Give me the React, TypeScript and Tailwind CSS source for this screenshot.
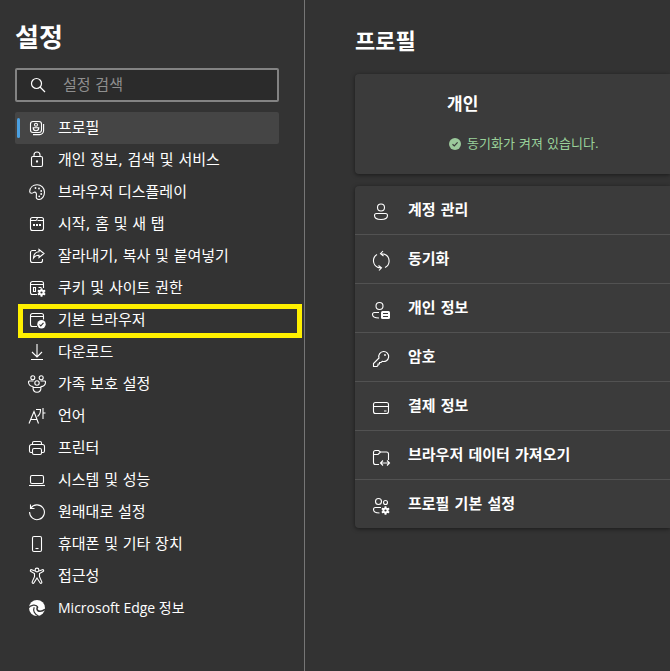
import type { ReactNode } from 'react';

type Item = { label: string; icon: ReactNode; active?: boolean; marked?: boolean };

function Gear({ x, y }: { x: number; y: number }) {
  return (
    <g transform={`translate(${x} ${y})`} stroke="none" fill="#fff">
      <circle r="3" />
      {[0, 60, 120].map((a) => (
        <rect key={a} x="-1" y="-4.2" width="2" height="8.4" rx="0.5" transform={`rotate(${a})`} />
      ))}
      <circle r="1.1" fill="#333" />
    </g>
  );
}

const navItems: Item[] = [
  {
    label: '프로필',
    active: true,
    icon: (
      <>
        <rect x="2.5" y="2.5" width="11" height="11" rx="2.5" />
        <circle cx="8" cy="5.8" r="1.5" />
        <path d="M5.2 8.7h5.6c0 2-1 3-2.8 3s-2.8-1-2.8-3zM15.6 5v6.6a4 4 0 0 1-4 4H5" />
      </>
    ),
  },
  {
    label: '개인 정보, 검색 및 서비스',
    icon: (
      <>
        <rect x="3.5" y="5.5" width="11" height="10" rx="1.5" />
        <path d="M6 5.500V4a3 3 0 0 1 6 0v1.500" />
        <circle cx="9" cy="10.500" r="0.600" fill="#fff" />
      </>
    ),
  },
  {
    label: '브라우저 디스플레이',
    icon: (
      <>
        <path d="M1.700 8.500C2 4.500 5 1.700 9 1.700c4.300 0 7.500 3.200 7.500 7.300 0 4.500-2.500 7.500-5.500 7.500-2 0-3-1.300-2.700-3 .3-1.800.4-3.500-.8-4.200-1.400-.8-2.300 1-3.800 1-1.300 0-2-.8-2-1.800z" />
        <g fill="#fff" stroke="none">
          <circle cx="7.500" cy="5" r="0.900" />
          <circle cx="11" cy="5.500" r="0.900" />
          <circle cx="13.200" cy="8" r="0.900" />
          <circle cx="13.200" cy="11" r="0.900" />
          <circle cx="11.200" cy="13.300" r="0.900" />
        </g>
      </>
    ),
  },
  {
    label: '시작, 홈 및 새 탭',
    icon: (
      <>
        <rect x="2.500" y="2.500" width="13" height="13" rx="2" />
        <path d="M2.500 5.500H8c1 0 .8-3 2-3M9.500 5.500h6" />
        <g fill="#fff" stroke="none">
          <rect x="5" y="9" width="2" height="2" />
          <rect x="8" y="9" width="2" height="2" />
          <rect x="11" y="9" width="2" height="2" />
        </g>
      </>
    ),
  },
  {
    label: '잘라내기, 복사 및 붙여넣기',
    icon: (
      <>
        <path d="M8 3.500H4.500a2 2 0 0 0-2 2v8a2 2 0 0 0 2 2h8a2 2 0 0 0 2-2V12" />
        <path d="M11 2.500l5 4-5 4V8.300c-2.500 0-4.200.7-5.500 2.700.2-3.700 2-5.900 5.500-6.200z" />
      </>
    ),
  },
  {
    label: '쿠키 및 사이트 권한',
    icon: (
      <>
        <path d="M15.500 9V4.500a2 2 0 0 0-2-2h-9a2 2 0 0 0-2 2v9a2 2 0 0 0 2 2H9M2.500 5.500h13M10.500 8.500h3M5.500 8.500h2v4h-2z" />
        <Gear x={13.5} y={13.500} />
      </>
    ),
  },
  {
    label: '기본 브라우저',
    marked: true,
    icon: (
      <>
        <path d="M15.500 8.500v-4a2 2 0 0 0-2-2h-9a2 2 0 0 0-2 2v9a2 2 0 0 0 2 2H9M2.500 5.500h13" />
        <circle cx="13.500" cy="13.300" r="4.200" fill="#fff" stroke="none" />
        <path d="M11.500 13.500l1.300 1.400 2.700-3" stroke="#333" />
      </>
    ),
  },
  { label: '다운로드', icon: <path d="M9 1v12.500M4 9l5 5 5-5M3 16.500h12" /> },
  {
    label: '가족 보호 설정',
    icon: (
      <>
        <circle cx="4.800" cy="2.800" r="2" />
        <circle cx="13.200" cy="2.800" r="2" />
        <circle cx="9" cy="8" r="2.200" />
        <path d="M5.500 11.500C2.500 11.500.5 9.800.5 7c0-.7.300-1 1-1H5.500M12.500 11.500c3 0 5-1.700 5-4.500 0-.7-.3-1-1-1H12.500M5 12.500h8c0 3-1.500 4.700-4 4.700s-4-1.700-4-4.700z" />
      </>
    ),
  },
  {
    label: '언어',
    icon: <path d="M1 16.500L6 4.500l4.500 12M2.700 12.500h6.200M8 2.500h4.500c0 3.500-1 5.500-3 7M15 1v11M15 6h2.500" />,
  },
  {
    label: '프린터',
    icon: (
      <>
        <path d="M4.500 13.500H3a1.500 1.500 0 0 1-1.500-1.500V7.500a2 2 0 0 1 2-2h11a2 2 0 0 1 2 2V12a1.500 1.500 0 0 1-1.500 1.500h-1.500M4.500 5.500V4A1.500 1.500 0 0 1 6 2.500h6A1.500 1.500 0 0 1 13.500 4v1.500" />
        <rect x="4.500" y="9.500" width="9" height="6" rx="1.500" />
      </>
    ),
  },
  {
    label: '시스템 및 성능',
    icon: (
      <>
        <rect x="2.500" y="4.500" width="13" height="8" rx="1.500" />
        <path d="M1 14.500h16" />
      </>
    ),
  },
  { label: '원래대로 설정', icon: <path d="M2.500 1.500v4h4M2.800 5.200a7.400 7.400 0 1 1-1.200 3.800" /> },
  {
    label: '휴대폰 및 기타 장치',
    icon: (
      <>
        <rect x="4.500" y="1.500" width="9" height="15" rx="1.500" />
        <path d="M7.500 13.500h3" />
      </>
    ),
  },
  {
    label: '접근성',
    icon: (
      <>
        <circle cx="9" cy="3" r="1.900" />
        <path d="M7 4L3.700 2.700c-1.300-.4-1.900 1.200-.8 1.800L6.500 6.500v3.200l-2.300 5.200c-.4 1.400 1.100 2 1.800.8L9 11l3 4.700c.7 1.200 2.200.6 1.800-.8L11.500 9.700V6.500l3.600-2c1.100-.6.5-2.200-.8-1.800L11 4" />
      </>
    ),
  },
  {
    label: 'Microsoft Edge 정보',
    icon: (
      <>
        <circle cx="9" cy="9" r="8" fill="#fff" stroke="none" />
        <path d="M0 9.500C2.500 5.500 8.500 5 9.800 8.300" stroke="#333" strokeWidth="1.300" />
        <path d="M10 8c-1.600 1-1.300 3.600.8 4.100 2 .5 4-.1 6.200-1.700" stroke="#333" strokeWidth="1.600" />
        <path d="M6.200 8.200c-1.500 3.500.3 7.200 4.300 8.800" stroke="#333" strokeWidth="1.200" />
      </>
    ),
  },
];

const profileItems: Item[] = [
  {
    label: '계정 관리',
    icon: (
      <>
        <circle cx="12" cy="9.500" r="3.500" />
        <path d="M7.500 15.500h9a2 2 0 0 1 2 2c0 2.500-2.500 4-6.500 4s-6.500-1.500-6.500-4a2 2 0 0 1 2-2z" />
      </>
    ),
  },
  {
    label: '동기화',
    icon: <path d="M8 7.500a7.300 7.300 0 0 0 1 13M16 20.500a7.300 7.300 0 0 0-1-13.500M14 4l-2.500 2.700L14.500 9M12.500 6.700c1.300 0 2.500.3 3.500.8M10 23.500l2.500-2.700L9.500 18.500M11.500 20.800c-1.300 0-2.500-.3-3.500-.8" />,
  },
  {
    label: '개인 정보',
    icon: (
      <>
        <circle cx="10.500" cy="10" r="3.500" />
        <path d="M10 16.500H5.500a2 2 0 0 0-2 2c0 2 2.500 3.500 6.500 3.500" />
        <rect x="12" y="15" width="9" height="8" rx="1.500" fill="#fff" stroke="none" />
        <path d="M14 17.500h5M14 20.500h5" stroke="#3b3b3b" />
      </>
    ),
  },
  {
    label: '암호',
    icon: (
      <>
        <path d="M14.500 6.500a5 5 0 1 1-1.200 9.800L12 17.500h-1.500V19H9v1.500l-1 1H4.500V18.500l5.500-5.500a5 5 0 0 1 4.500-6.500z" />
        <circle cx="16" cy="10" r="0.900" fill="#fff" stroke="none" />
      </>
    ),
  },
  {
    label: '결제 정보',
    icon: (
      <>
        <rect x="4.500" y="8.500" width="15" height="11" rx="2" />
        <path d="M4.500 12.500h15M15 17h2.500" />
      </>
    ),
  },
  {
    label: '브라우저 데이터 가져오기',
    icon: (
      <>
        <path d="M10 21.500H6.500a2 2 0 0 1-2-2v-10a2 2 0 0 1 2-2h3l2 1.500h6a2 2 0 0 1 2 2v6M4.500 11.500h4.500l2.500-2.500" />
        <path d="M12 20h8.500M14 17.500L11.500 20l2.500 2.500M18 17.500l2.500 2.500-2.500 2.500" />
      </>
    ),
  },
  {
    label: '프로필 기본 설정',
    icon: (
      <>
        <circle cx="9.500" cy="9.500" r="3" />
        <circle cx="16.500" cy="10.500" r="2" />
        <path d="M12 15.500H6.500a2 2 0 0 0-2 2c0 2.200 2 3.500 6 3.500" />
        <Gear x={16.500} y={18.500} />
      </>
    ),
  },
];

export default function App() {
  return (
    <div className="flex min-h-screen overflow-hidden bg-[#333333] font-['DejaVu_Sans','Noto_Sans_CJK_KR',sans-serif] text-white">
      <aside className="w-[305px] shrink-0 border-r border-[#767676] pt-5 pr-[25px] pl-[15px]">
        <h1 className="text-[26px] leading-9 font-bold">설정</h1>
        <label className="mt-3 flex h-[34px] items-center gap-4 rounded-xs border-2 border-[#838383] bg-[#2b2b2b] pl-3">
          <svg className="size-[18px] shrink-0" viewBox="0 0 18 18" fill="none" stroke="#fff" strokeWidth="1.2" aria-hidden="true">
            <circle cx="7.500" cy="7.500" r="5" />
            <path d="M11 11l5 5" />
          </svg>
          <input
            type="search"
            aria-label="설정 검색"
            placeholder="설정 검색"
            className="min-w-0 flex-1 bg-transparent text-[15px] leading-5 outline-none placeholder:text-[#8f8f8f]"
          />
        </label>
        <nav className="mt-2.5">
          <ul>
            {navItems.map((item) => (
              <li key={item.label} className="relative">
                <a
                  href="#"
                  className={`flex h-8 items-center gap-3 rounded-xs ${item.active ? 'bg-[#454545]' : ''}`}
                >
                  <span className="flex items-center gap-2">
                    <span className={`ml-0.5 h-5 w-[3px] rounded-xs ${item.active ? 'bg-[#4ba0e1]' : ''}`} />
                    <svg className="size-[18px]" viewBox="0 0 18 18" fill="none" stroke="#fff" strokeWidth="1.1" aria-hidden="true">
                      {item.icon}
                    </svg>
                  </span>
                  <span
                    className={
                      item.label.startsWith('Microsoft')
                        ? "font-['Open_Sans','Noto_Sans_CJK_KR',sans-serif] text-[14px] leading-5"
                        : 'text-[15px] leading-5'
                    }
                  >
                    {item.label}
                  </span>
                </a>
                {item.marked && (
                  <span className="pointer-events-none absolute top-0 left-[3px] h-[34px] w-[284px] border-[5px] border-[#fff000]" />
                )}
              </li>
            ))}
          </ul>
        </nav>
      </aside>
      <main className="min-w-0 flex-1 pt-6 pl-[50px]">
        <h2 className="text-[22px] leading-9 font-bold">프로필</h2>
        <section className="mt-3.5 flex h-[100px] flex-col justify-center gap-5 rounded-l-sm bg-[#3b3b3b] pl-[92px] shadow-[0_1px_4px_rgba(0,0,0,0.5)]">
          <h3 className="text-[17px] leading-5 font-bold">개인</h3>
          <p className="flex items-center gap-1.5 text-[13px] leading-5 text-[#9ad29a]">
            <svg className="ml-0.5 size-3" viewBox="0 0 12 12" fill="none" aria-hidden="true">
              <circle cx="6" cy="6" r="6" fill="#9bc99b" />
              <path d="M3.500 6.200l1.800 1.700 3.300-3.500" stroke="#3b3b3b" strokeWidth="1.200" />
            </svg>
            동기화가 켜져 있습니다.
          </p>
        </section>
        <ul className="mt-3 divide-y divide-[#525252] rounded-l-sm bg-[#3b3b3b] shadow-[0_1px_4px_rgba(0,0,0,0.5)]">
          {profileItems.map((item) => (
            <li key={item.label}>
              <a href="#" className="flex h-12 items-center gap-[15px] pl-3.5 text-[15px] leading-5 font-bold">
                <svg className="size-6" viewBox="0 0 24 24" fill="none" stroke="#fff" strokeWidth="1.1" aria-hidden="true">
                  {item.icon}
                </svg>
                {item.label}
              </a>
            </li>
          ))}
        </ul>
      </main>
    </div>
  );
}
